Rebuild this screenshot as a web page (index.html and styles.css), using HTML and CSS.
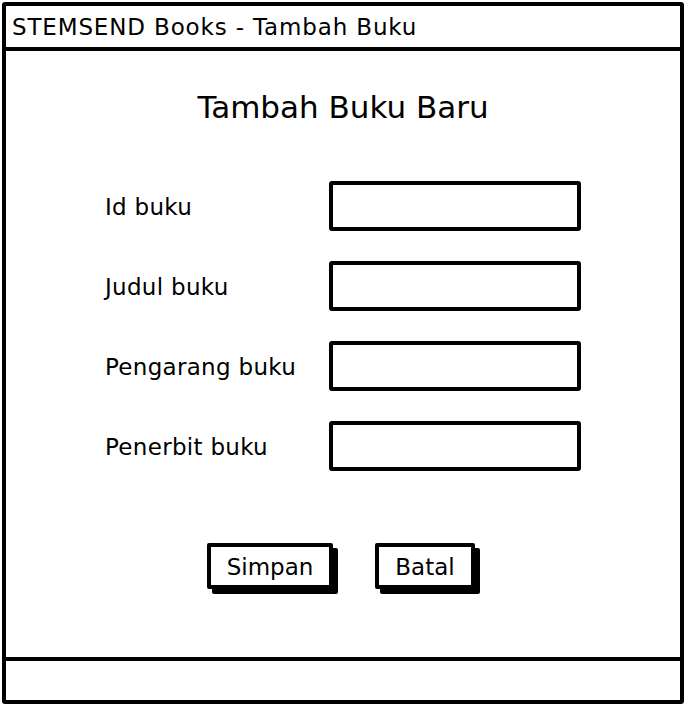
FILE: index.html
```html
<!DOCTYPE html>
<html lang="id">
<head>
  <meta charset="UTF-8" />
  <meta name="viewport" content="width=device-width, initial-scale=1.0"/>
  <title>STEMSEND Books - Tambah Buku</title>
  <link rel="stylesheet" href="styles.css">
</head>
<body>
  <div class="window">
    <div class="titlebar">STEMSEND Books - Tambah Buku</div>

    <div class="content">
      <h1>Tambah Buku Baru</h1>

      <form class="form">
        <label for="idBuku">Id buku</label>
        <input type="text" id="idBuku" />

        <label for="judulBuku">Judul buku</label>
        <input type="text" id="judulBuku" />

        <label for="pengarangBuku">Pengarang buku</label>
        <input type="text" id="pengarangBuku" />

        <label for="penerbitBuku">Penerbit buku</label>
        <input type="text" id="penerbitBuku" />
      </form>

      <div class="actions">
        <button class="btn btn-save">Simpan</button>
        <button class="btn btn-cancel">Batal</button>
      </div>
    </div>

    <div class="statusbar"></div>
  </div>
</body>
</html>
```

FILE: styles.css
```css
body {
  margin: 0;
  background-color: #fff;
  font-family: "DejaVu Sans", sans-serif;
  color: #000;
}

.window {
  box-sizing: border-box;
  margin: 2px;
  width: 682px;
  height: 702px;
  border: 4px solid #000;
  border-radius: 3px;
  display: flex;
  flex-direction: column;
}

.titlebar {
  height: 41px;
  border-bottom: 4px solid #000;
  padding-left: 6px;
  font-size: 23px;
  letter-spacing: 0.85px;
  line-height: 43px;
}

.content {
  flex: 1;
  display: flex;
  flex-direction: column;
  align-items: center;
}

h1 {
  margin: 36px 0 0;
  font-size: 31px;
  font-weight: normal;
  line-height: 40px;
}

.form {
  margin-top: 54px;
  display: grid;
  grid-template-columns: 224px 252px;
  row-gap: 30px;
  align-items: center;
}

label {
  font-size: 23px;
  letter-spacing: 0.3px;
  padding-top: 2px;
}

input {
  box-sizing: border-box;
  height: 50px;
  width: 252px;
  border: 4px solid #000;
  border-radius: 3px;
  margin: 0;
}

.actions {
  margin-top: 72px;
  margin-left: -4px;
  display: flex;
  gap: 42px;
}

.btn {
  box-sizing: border-box;
  height: 46px;
  border: 4px solid #000;
  border-radius: 2px;
  background: #fff;
  box-shadow: 5px 5px 0 #000;
  font-family: "DejaVu Sans", sans-serif;
  font-size: 23px;
  padding: 2px 0 0;
}

.btn-save {
  width: 126px;
}

.btn-cancel {
  width: 100px;
}

.statusbar {
  height: 39px;
  border-top: 4px solid #000;
}
```
